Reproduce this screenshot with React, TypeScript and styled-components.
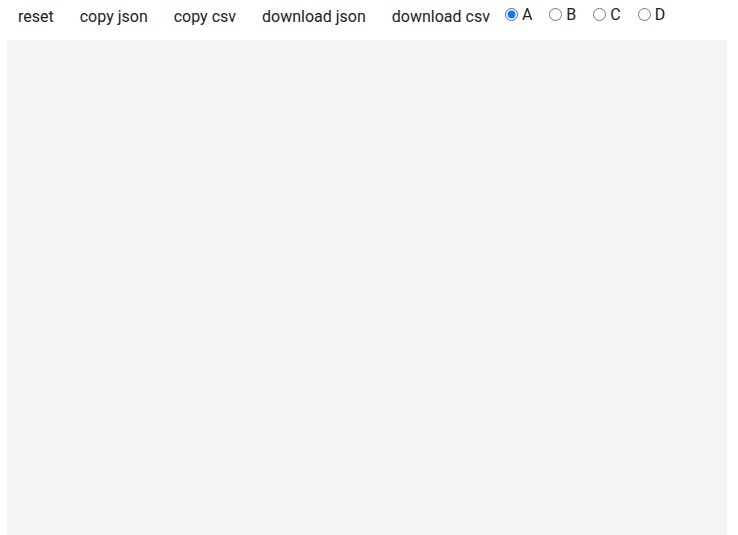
import React, { useState } from "react";
import styled, { createGlobalStyle } from "styled-components";

const Global = createGlobalStyle`
  html, body { margin: 0; padding: 0; background: #fff; }
  body { font-family: Roboto, "Noto Sans", sans-serif; color: #222; }
`;

const Page = styled.div`
  display: flex;
  flex-direction: column;
  height: 535px;
  overflow: hidden;
`;

const Toolbar = styled.div`
  display: flex;
  align-items: flex-start;
  height: 40px;
  padding-left: 5px;
`;

const ToolButton = styled.button`
  font-family: Roboto, sans-serif;
  font-size: 16px;
  color: #222;
  background: transparent;
  border: none;
  padding: 1px 13px 0;
  height: 33px;
  line-height: 32px;
  cursor: pointer;
`;

const RadioGroup = styled.div`
  display: flex;
  align-items: center;
  height: 29px;
  margin-left: -3px;
`;

const RadioLabel = styled.label`
  display: inline-flex;
  align-items: center;
  font-size: 16px;
  line-height: 18px;
  margin-right: 12px;
  color: #222;
`;

const Radio = styled.input`
  width: 13px;
  height: 13px;
  margin: 0 4px 0 5px;
  accent-color: #1a73e8;
`;

const Canvas = styled.div`
  flex: 1;
  margin: 0 11px 0 7px;
  background: #f4f4f4;
`;

export default function App() {
  const [sel, setSel] = useState("A");
  return (
    <Page>
      <Global />
      <Toolbar>
        <ToolButton>reset</ToolButton>
        <ToolButton>copy json</ToolButton>
        <ToolButton>copy csv</ToolButton>
        <ToolButton>download json</ToolButton>
        <ToolButton>download csv</ToolButton>
        <RadioGroup>
          {["A", "B", "C", "D"].map((k) => (
            <RadioLabel key={k}>
              <Radio type="radio" name="mode" checked={sel === k} onChange={() => setSel(k)} />
              {k}
            </RadioLabel>
          ))}
        </RadioGroup>
      </Toolbar>
      <Canvas />
    </Page>
  );
}
